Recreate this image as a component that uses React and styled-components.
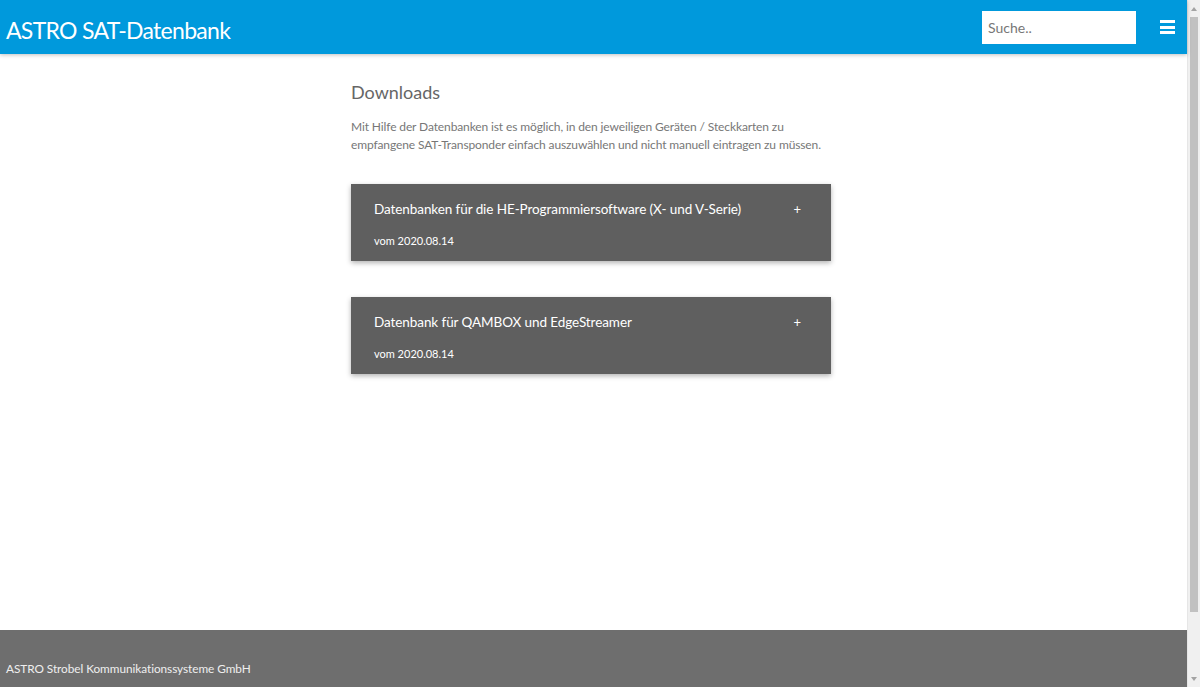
import React from 'react'
import styled, { createGlobalStyle } from 'styled-components'

const FONT = `Lato, "Open Sans", "Liberation Sans", sans-serif`

const GlobalStyle = createGlobalStyle`
  html, body {
    margin: 0;
    padding: 0;
    height: 100%;
    overflow: hidden;
  }
  body {
    font-family: ${FONT};
    background: #fff;
  }
  #root {
    height: 100%;
  }
`

const Frame = styled.div`
  display: flex;
  height: 687px;
`

const Page = styled.div`
  flex: 1;
  display: flex;
  flex-direction: column;
  min-width: 0;
`

const Header = styled.header`
  height: 54px;
  flex-shrink: 0;
  background: #0099dc;
  display: flex;
  align-items: center;
  padding: 0 12px 0 6px;
  box-shadow: 0 1px 4px rgba(0, 0, 0, 0.25);
  position: relative;
  z-index: 2;
`

const Brand = styled.h1`
  margin: 0;
  flex: 1;
  font-size: 23px;
  font-weight: 400;
  letter-spacing: -0.7px;
  color: #fff;
  padding-top: 5px;
`

const Search = styled.input`
  width: 154px;
  height: 33px;
  box-sizing: border-box;
  border: none;
  outline: none;
  padding: 0 6px;
  font-family: ${FONT};
  font-size: 14px;
  color: #333;
  margin-right: 24px;
  &::placeholder {
    color: #777;
  }
`

const Burger = styled.button`
  width: 15px;
  height: 14px;
  padding: 0;
  border: none;
  background: none;
  display: flex;
  flex-direction: column;
  justify-content: space-between;
  cursor: pointer;
  span {
    display: block;
    height: 3px;
    background: #fff;
  }
`

const Main = styled.main`
  flex: 1;
  display: flex;
  justify-content: center;
  align-items: flex-start;
  padding-top: 25px;
`

const Column = styled.div`
  width: 480px;
  margin-left: -5px;
`

const Title = styled.h2`
  margin: 0 0 13px;
  font-size: 18px;
  font-weight: 400;
  color: #666;
  line-height: 26px;
`

const Intro = styled.p`
  margin: 0 0 30px;
  font-size: 12px;
  letter-spacing: -0.12px;
  line-height: 18px;
  color: #777;
`

const Card = styled.div`
  background: #5f5f5f;
  height: 77px;
  box-sizing: border-box;
  padding: 15px 23px 0;
  box-shadow: 0 2px 5px rgba(0, 0, 0, 0.3);
  margin-bottom: 36px;
  color: #fff;
`

const CardHead = styled.div`
  display: flex;
  justify-content: space-between;
  align-items: center;
  font-size: 13.5px;
  letter-spacing: -0.08px;
  line-height: 20px;
`

const Plus = styled.span`
  font-size: 13px;
  margin-right: 7px;
`

const CardDate = styled.div`
  margin-top: 14px;
  font-size: 11px;
  line-height: 16px;
`

const Footer = styled.footer`
  height: 57px;
  flex-shrink: 0;
  box-sizing: border-box;
  background: #6e6e6e;
  color: #eee;
  font-size: 11.8px;
  letter-spacing: -0.05px;
  padding: 31px 6px 0;
`

const Scrollbar = styled.div`
  width: 12px;
  background: #f0f0f0;
  display: flex;
  flex-direction: column;
  align-items: center;
  border-left: 1px solid #e6e6e6;
`

const Arrow = styled.div`
  height: 17px;
  display: flex;
  align-items: center;
  justify-content: center;
  width: 100%;
`

const Thumb = styled.div`
  width: 8px;
  height: 595px;
  background: #c1c1c1;
`

const Spacer = styled.div`
  flex: 1;
`

const downloads = [
  { title: 'Datenbanken für die HE-Programmiersoftware (X- und V-Serie)', date: 'vom 2020.08.14' },
  { title: 'Datenbank für QAMBOX und EdgeStreamer', date: 'vom 2020.08.14' },
]

const Tri = ({ down }) => (
  <svg width="6" height="4" viewBox="0 0 6 4">
    <path d={down ? 'M0 0 L6 0 L3 4 Z' : 'M0 4 L6 4 L3 0 Z'} fill="#a3a3a3" />
  </svg>
)

export default function App() {
  return (
    <Frame>
      <GlobalStyle />
      <Page>
        <Header>
          <Brand>ASTRO SAT-Datenbank</Brand>
          <Search placeholder="Suche.." />
          <Burger aria-label="Menü">
            <span />
            <span />
            <span />
          </Burger>
        </Header>
        <Main>
          <Column>
            <Title>Downloads</Title>
            <Intro>
              Mit Hilfe der Datenbanken ist es möglich, in den jeweiligen Geräten / Steckkarten zu
              <br />
              empfangene SAT-Transponder einfach auszuwählen und nicht manuell eintragen zu müssen.
            </Intro>
            {downloads.map(d => (
              <Card key={d.title}>
                <CardHead>
                  <span>{d.title}</span>
                  <Plus>+</Plus>
                </CardHead>
                <CardDate>{d.date}</CardDate>
              </Card>
            ))}
          </Column>
        </Main>
        <Footer>ASTRO Strobel Kommunikationssysteme GmbH</Footer>
      </Page>
      <Scrollbar>
        <Arrow><Tri /></Arrow>
        <Thumb />
        <Spacer />
        <Arrow><Tri down /></Arrow>
      </Scrollbar>
    </Frame>
  )
}
